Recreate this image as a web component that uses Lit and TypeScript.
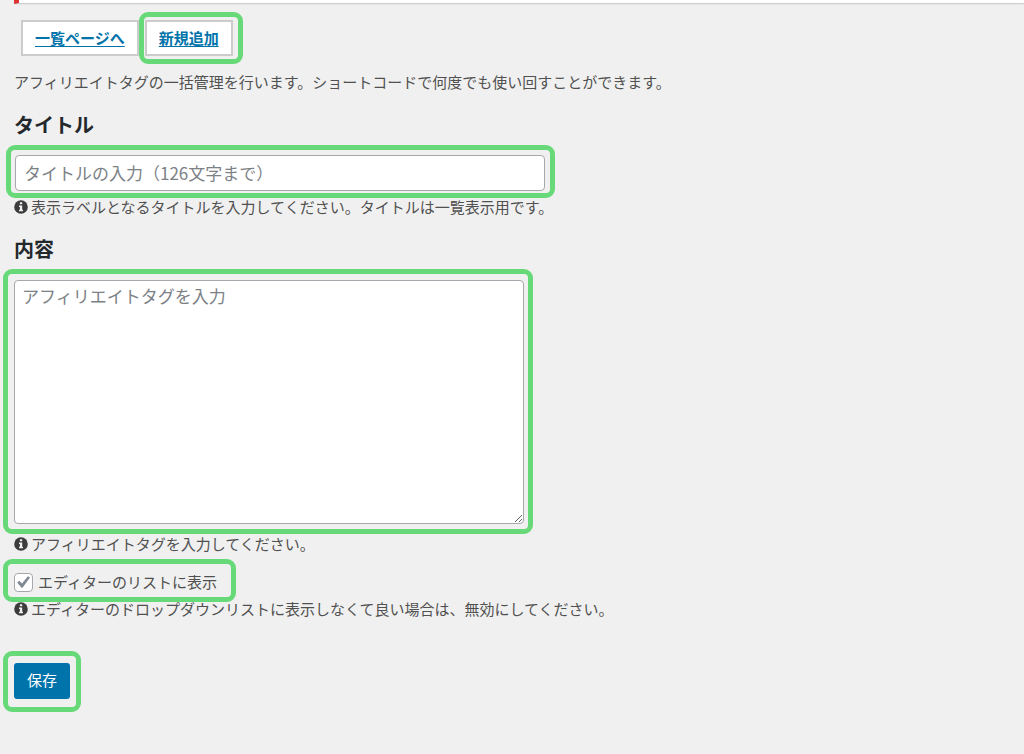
import { LitElement, html, css } from "lit";
import { customElement, property, state } from "lit/decorators.js";

@customElement("info-hint")
class InfoHint extends LitElement {
  static styles = css`
    :host {
      display: flex;
      align-items: center;
      gap: 3px;
      line-height: 22px;
    }
    .icon {
      flex: none;
      width: 14px;
      height: 14px;
    }
  `;

  render() {
    return html`
      <svg class="icon" viewBox="0 0 14 14" aria-hidden="true">
        <circle cx="7" cy="7" r="6.8" fill="#3c3c3c" />
        <path d="M5.9 2.2h2.3v2H5.9zM5 5.4h3.2v4.4H9v1.5H5V9.8h.9V6.9H5z" fill="#f0f0f0" />
      </svg>
      <span><slot></slot></span>
    `;
  }
}

@customElement("app-root")
class AppRoot extends LitElement {
  @property() tag = "";
  @state() private listed = true;

  static styles = css`
    :host {
      display: block;
      min-height: 100vh;
      background: #f0f0f0;
      color: #505050;
      font-family: "Noto Sans CJK JP", sans-serif;
      font-size: 15px;
      line-height: 22px;
    }
    *,
    *::after {
      box-sizing: border-box;
    }
    .page {
      padding-left: 14px;
      padding-bottom: 40px;
    }
    .notice {
      height: 4px;
      background: #fff;
      border-bottom: 1px solid #ccd0d4;
      border-left: 5px solid #dc3232;
      box-shadow: 0 1px 1px rgba(0, 0, 0, 0.04);
    }
    .tabs {
      display: flex;
      gap: 6px;
      margin: 16px 0 0 7px;
    }
    .tab {
      padding: 5px 12px;
      border: 2px solid #ccc;
      background: #fff;
      line-height: 22px;
    }
    .tab a {
      color: #0073aa;
      font-weight: 700;
      text-underline-offset: 2px;
    }
    .lead {
      margin: 15px 0 0;
    }
    h2 {
      margin: 18px 0 16px;
      color: #23282d;
      font-size: 20px;
      font-weight: 700;
      line-height: 28px;
    }
    .marked {
      position: relative;
      width: fit-content;
      max-width: 100%;
    }
    .marked::after {
      content: "";
      position: absolute;
      inset: -11px;
      border: 5px solid #68d978;
      border-radius: 9px;
      pointer-events: none;
    }
    .tab.marked::after {
      inset: -10px -12px -10px -8px;
    }
    .marked.title::after {
      inset: -10px -9px -7px -8px;
    }
    .marked.area::after {
      inset: -11px -9px -10px -11px;
    }
    .marked.check::after {
      inset: -12px -19px -9px -11px;
    }
    .marked.save::after {
      inset: -12px -11px -13px;
    }
    input[type="text"],
    textarea {
      display: block;
      max-width: 100%;
      border: 1px solid #a5a8ac;
      border-radius: 4px;
      background: #fff;
      color: #32373c;
      font: inherit;
      font-size: 17px;
    }
    input[type="text"] {
      width: 530px;
      height: 36px;
      margin: 0 1px;
      padding: 0 8px 2px;
    }
    textarea {
      width: 510px;
      height: 244px;
      padding: 3px 7px;
      line-height: 24px;
      resize: both;
    }
    ::placeholder {
      color: #7c8186;
      opacity: 1;
    }
    .after-input {
      margin-top: 5px;
    }
    .after-input + h2 {
      margin: 17px 0 17px;
    }
    .after-area {
      margin-top: 9px;
    }
    .check {
      display: flex;
      align-items: center;
      gap: 5px;
      margin-top: 16px;
    }
    input[type="checkbox"] {
      appearance: none;
      width: 19px;
      height: 19px;
      margin: 0;
      border: 1px solid #a5a8ac;
      border-radius: 4px;
      background: #fff;
    }
    input[type="checkbox"]:checked {
      background: #fff
        url("data:image/svg+xml,%3Csvg xmlns='http://www.w3.org/2000/svg' viewBox='0 0 17 17'%3E%3Cpath d='M2.2 8.6 4.2 6.7 7 9.6 12.9 2.2 15 3.5 7.5 13.8H6.5z' fill='%237e8993'/%3E%3C/svg%3E")
        center / 17px 17px no-repeat;
    }
    .save {
      margin-top: 43px;
    }
    button {
      display: block;
      height: 36px;
      padding: 0 13px 2px;
      border: 0;
      border-radius: 3px;
      background: #0073aa;
      color: #fff;
      font: inherit;
    }
  `;

  render() {
    return html`
      <main class="page">
        <div class="notice"></div>
        <nav class="tabs">
          <div class="tab"><a href="#list">一覧ページへ</a></div>
          <div class="tab marked"><a href="#new">新規追加</a></div>
        </nav>
        <p class="lead">
          アフィリエイトタグの一括管理を行います。ショートコードで何度でも使い回すことができます。
        </p>

        <h2><label for="title">タイトル</label></h2>
        <div class="marked title">
          <input id="title" type="text" maxlength="126" placeholder="タイトルの入力（126文字まで）" />
        </div>
        <info-hint class="after-input"
          >表示ラベルとなるタイトルを入力してください。タイトルは一覧表示用です。</info-hint
        >

        <h2><label for="content">内容</label></h2>
        <div class="marked area">
          <textarea
            id="content"
            placeholder="アフィリエイトタグを入力"
            .value=${this.tag}
            @input=${(e: Event) => (this.tag = (e.target as HTMLTextAreaElement).value)}
          ></textarea>
        </div>
        <info-hint class="after-area">アフィリエイトタグを入力してください。</info-hint>

        <div class="marked check">
          <input
            id="listed"
            type="checkbox"
            .checked=${this.listed}
            @change=${(e: Event) => (this.listed = (e.target as HTMLInputElement).checked)}
          />
          <label for="listed">エディターのリストに表示</label>
        </div>
        <info-hint class="after-input"
          >エディターのドロップダウンリストに表示しなくて良い場合は、無効にしてください。</info-hint
        >

        <div class="marked save"><button type="button">保存</button></div>
      </main>
    `;
  }
}
